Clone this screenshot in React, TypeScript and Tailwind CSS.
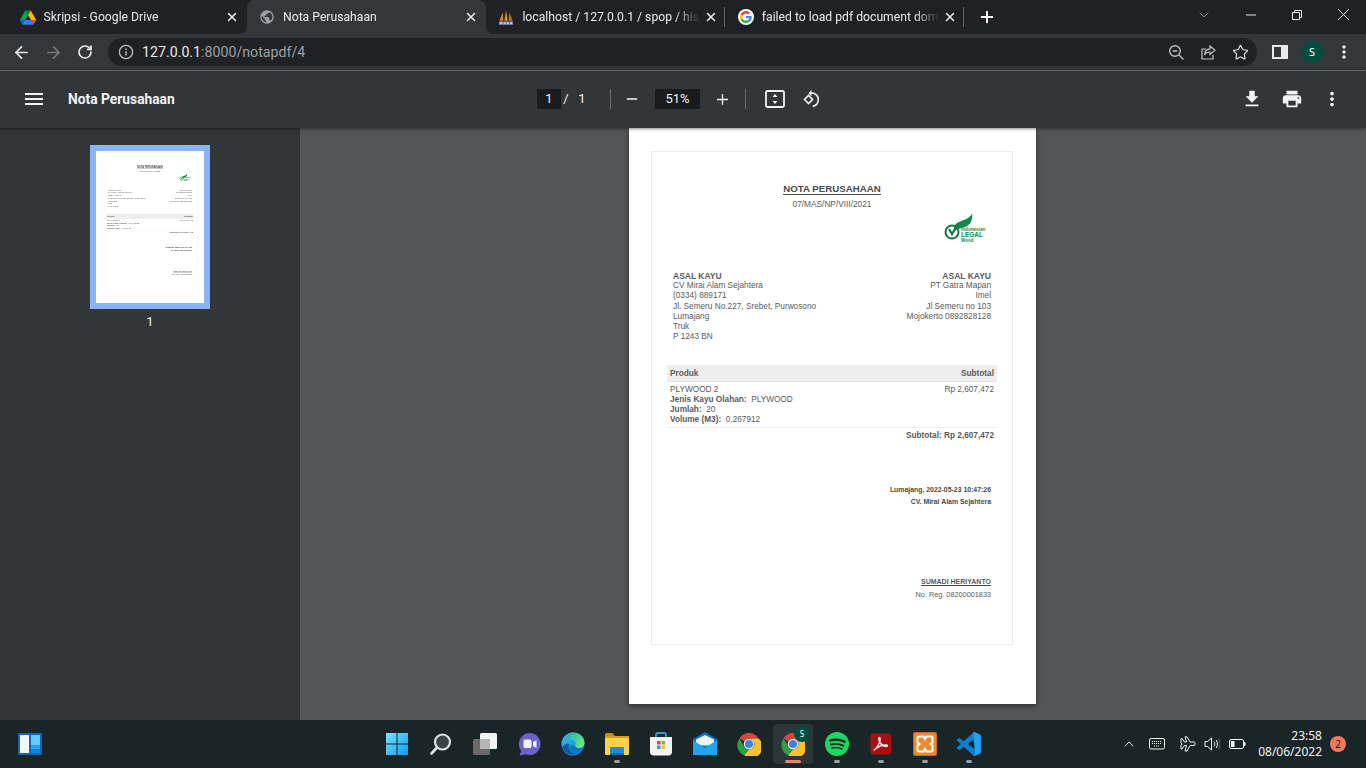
import React from "react";
import { ArrowLeft, ArrowRight, RotateCw, X, Plus, Minus, Star, ChevronDown, ChevronUp } from "lucide-react";

const DriveIcon = () => (
  <svg width="16" height="15" viewBox="0 0 87.3 78">
    <path d="M6.6 66.85l3.85 6.65c.8 1.4 1.95 2.5 3.3 3.3L27.5 53H0c0 1.55.4 3.1 1.2 4.5z" fill="#0066da" />
    <path d="M43.65 25L29.9 1.2c-1.35.8-2.5 1.9-3.3 3.3L1.2 48.5A9.06 9.06 0 000 53h27.5z" fill="#00ac47" />
    <path d="M73.55 76.8c1.35-.8 2.5-1.9 3.3-3.3l1.6-2.75 7.65-13.25c.8-1.4 1.2-2.95 1.2-4.5H59.798l5.852 11.5z" fill="#ea4335" />
    <path d="M43.65 25L57.4 1.2C56.05.4 54.5 0 52.9 0H34.4c-1.6 0-3.15.45-4.5 1.2z" fill="#00832d" />
    <path d="M59.8 53H27.5L13.75 76.8c1.35.8 2.9 1.2 4.5 1.2h50.8c1.6 0 3.15-.45 4.5-1.2z" fill="#2684fc" />
    <path d="M73.4 26.5l-12.7-22c-.8-1.4-1.95-2.5-3.3-3.3L43.65 25 59.8 53h27.45c0-1.55-.4-3.1-1.2-4.5z" fill="#ffba00" />
  </svg>
);

const GlobeIcon = () => (
  <svg width="18" height="18" viewBox="0 0 24 24" fill="#9aa0a6">
    <path d="M12 2C6.48 2 2 6.48 2 12s4.48 10 10 10 10-4.48 10-10S17.52 2 12 2zm-1 17.93c-3.95-.49-7-3.85-7-7.93 0-.62.08-1.21.21-1.79L9 15v1c0 1.1.9 2 2 2v1.93zm6.9-2.54c-.26-.81-1-1.39-1.9-1.39h-1v-3c0-.55-.45-1-1-1H8v-2h2c.55 0 1-.45 1-1V7h2c1.1 0 2-.9 2-2v-.41c2.93 1.19 5 4.06 5 7.41 0 2.08-.8 3.97-2.1 5.39z" />
  </svg>
);

const PmaIcon = () => (
  <svg width="17" height="17" viewBox="0 0 17 17">
    <path d="M8.5 0.5 L6.8 12 H10.2 Z" fill="#f29111" />
    <path d="M5 3 L1.5 12 H5.6 Z" fill="#e4831a" />
    <path d="M12 3 L15.5 12 H11.4 Z" fill="#c96f14" />
    <path d="M1 12.5H16V16.5H1Z" fill="#6c78a8" />
    <path d="M2 13.5h2.5v2H2zM6 13.5h2v2H6zM9.5 13.5h2v2h-2zM13 13.5h2v2h-2z" fill="#cfd4e6" />
  </svg>
);

const GoogleIcon = () => (
  <span className="flex h-4 w-4 shrink-0 items-center justify-center rounded-full bg-white">
    <svg width="12" height="12" viewBox="0 0 48 48">
      <path fill="#EA4335" d="M24 9.5c3.54 0 6.71 1.22 9.21 3.6l6.85-6.85C35.9 2.38 30.47 0 24 0 14.62 0 6.51 5.38 2.56 13.22l7.98 6.19C12.43 13.72 17.74 9.5 24 9.5z" />
      <path fill="#4285F4" d="M46.98 24.55c0-1.57-.15-3.09-.38-4.55H24v9.02h12.94c-.58 2.96-2.26 5.48-4.78 7.18l7.73 6c4.51-4.18 7.09-10.36 7.09-17.65z" />
      <path fill="#FBBC05" d="M10.53 28.59c-.48-1.45-.76-2.99-.76-4.59s.27-3.14.76-4.59l-7.98-6.19C.92 16.46 0 20.12 0 24c0 3.88.92 7.54 2.56 10.78l7.97-6.19z" />
      <path fill="#34A853" d="M24 48c6.48 0 11.93-2.13 15.89-5.81l-7.73-6c-2.15 1.45-4.92 2.3-8.16 2.3-6.26 0-11.57-4.22-13.47-9.91l-7.98 6.19C6.51 42.62 14.62 48 24 48z" />
    </svg>
  </span>
);

function Tab({ icon, title, active, sep }: { icon: React.ReactNode; title: string; active?: boolean; sep?: boolean }) {
  return (
    <div className={`relative flex h-[34px] w-[239.4px] shrink-0 items-center pl-3 pr-[8px] ${active ? "rounded-t-[8px] bg-[#35363a]" : ""}`}>
      {active && (
        <>
          <svg className="absolute bottom-0 left-[-8px]" width="8" height="8" viewBox="0 0 8 8"><path d="M8 0V8H0C5 8 8 5 8 0Z" fill="#35363a" /></svg>
          <svg className="absolute bottom-0 right-[-8px]" width="8" height="8" viewBox="0 0 8 8"><path d="M0 0V8H8C3 8 0 5 0 0Z" fill="#35363a" /></svg>
        </>
      )}
      <span className="flex w-4 shrink-0 items-center justify-center">{icon}</span>
      <span className="ml-2 min-w-0 flex-1 overflow-hidden whitespace-nowrap text-[12.2px] leading-4 text-[#e8eaed] [mask-image:linear-gradient(to_right,black_86%,transparent)] [font-family:Roboto,sans-serif]">
        {title}
      </span>
      <X size={14} strokeWidth={2.6} className="ml-1 shrink-0 text-[#e8eaed]" />
      {sep && <span className="absolute right-[1px] top-[7px] h-5 w-px bg-[#5f6368]" />}
    </div>
  );
}

function TabStrip() {
  return (
    <div className="flex h-[34px] items-center bg-[#202124] pl-[7.6px]">
      <Tab icon={<DriveIcon />} title="Skripsi - Google Drive" />
      <Tab icon={<GlobeIcon />} title="Nota Perusahaan" active />
      <Tab icon={<PmaIcon />} title="localhost / 127.0.0.1 / spop / history" sep />
      <Tab icon={<GoogleIcon />} title="failed to load pdf document domain" sep />
      <Plus size={18} strokeWidth={2.6} className="ml-[13px] text-white" />
      <ChevronDown size={16} strokeWidth={1} className="mb-[5px] ml-[200px] text-[#c4c7c9]" />
      <svg className="mb-[5px] ml-[33px]" width="12" height="12" viewBox="0 0 12 12"><path d="M1 6H11" stroke="#e8eaed" /></svg>
      <svg className="mb-[5px] ml-[34px]" width="12" height="12" viewBox="0 0 12 12" fill="none" stroke="#e8eaed"><path d="M1.5 3.5h7v7h-7zM3.5 3.5v-2h7v7h-2" /></svg>
      <svg className="mb-[5px] ml-[34px]" width="13" height="13" viewBox="0 0 13 13" stroke="#e8eaed"><path d="M1 1L12 12M12 1L1 12" /></svg>
    </div>
  );
}

function BrowserToolbar() {
  return (
    <div className="flex h-[36px] items-center bg-[#35363a] pl-[5px] pr-[6px]">
      <span className="flex w-8 justify-center"><ArrowLeft size={19} strokeWidth={2.2} className="text-[#e8eaed]" /></span>
      <span className="flex w-8 justify-center"><ArrowRight size={19} strokeWidth={2.2} className="text-[#75787c]" /></span>
      <span className="flex w-8 justify-center"><RotateCw size={16} strokeWidth={2.6} className="text-[#e8eaed]" /></span>
      <div className="ml-[7px] flex h-7 flex-1 items-center rounded-full bg-[#202124] pl-[10px] pr-px">
        <svg width="16" height="16" viewBox="0 0 16 16" fill="none">
          <circle cx="8" cy="8" r="6.6" stroke="#bdc1c6" strokeWidth="1.3" />
          <path d="M8 7.2V11.4M8 4.6V6" stroke="#bdc1c6" strokeWidth="1.4" />
        </svg>
        <span className="ml-2 flex-1 text-[14.2px] leading-5 text-[#9aa0a6] [font-family:Roboto,sans-serif]">
          <span className="text-[#e8eaed]">127.0.0.1</span>:8000/notapdf/4
        </span>
        <span className="flex w-8 justify-center">
          <svg width="17" height="17" viewBox="0 0 17 17" fill="none" stroke="#bdc1c6" strokeWidth="1.4"><circle cx="7" cy="7" r="5.3" /><path d="M11 11l4.5 4.5M4.7 7h4.6" /></svg>
        </span>
        <span className="flex w-8 justify-center">
          <svg width="17" height="17" viewBox="0 0 17 17" fill="none" stroke="#bdc1c6" strokeWidth="1.2"><path d="M6 5H2v10h11v-4" /><path d="M10 2l5 4.2-5 4.2V8C7.5 8 5.6 9 4.6 11c.2-3.5 2.2-6 5.4-6.2z" /></svg>
        </span>
        <span className="flex w-8 justify-center"><Star size={17} strokeWidth={1.7} className="text-[#dadce0]" /></span>
      </div>
      <span className="ml-[7px] flex w-8 justify-center">
        <svg width="16" height="14" viewBox="0 0 16 14" fill="none"><rect x="1" y="1" width="14" height="12" stroke="#e8eaed" strokeWidth="2" /><rect x="9" y="1" width="6" height="12" fill="#e8eaed" /></svg>
      </span>
      <span className="flex w-8 justify-center">
        <span className="flex h-[22px] w-[22px] items-center justify-center rounded-full bg-[#004d40] text-[11px] text-white [font-family:'Noto_Sans',sans-serif]">S</span>
      </span>
      <span className="flex w-8 justify-center">
        <svg width="20" height="20" viewBox="0 0 24 24" fill="#e8eaed"><path d="M12 8c1.1 0 2-.9 2-2s-.9-2-2-2-2 .9-2 2 .9 2 2 2zm0 2c-1.1 0-2 .9-2 2s.9 2 2 2 2-.9 2-2-.9-2-2-2zm0 6c-1.1 0-2 .9-2 2s.9 2 2 2 2-.9 2-2-.9-2-2-2z" /></svg>
      </span>
    </div>
  );
}

function PdfToolbar() {
  return (
    <div className="relative z-10 flex h-[58px] items-center border-t border-[#5f6368] bg-[#323639] pb-px text-[#f1f3f4] shadow-[0_1px_3px_rgba(0,0,0,0.45)] [font-family:Roboto,sans-serif]">
      <div className="flex w-[537px] shrink-0 items-center pl-[22px]">
        <svg width="24" height="24" viewBox="0 0 24 24" fill="#f1f3f4"><path d="M3 18h18v-2H3v2zm0-5h18v-2H3v2zm0-7v2h18V6H3z" /></svg>
        <span className="ml-[22px] text-[13.8px] font-bold">Nota Perusahaan</span>
      </div>
      <span className="flex h-5 w-6 items-center justify-center bg-[#191b1c] text-[13px]">1</span>
      <span className="ml-px w-[8px] text-center text-[13px]">/</span>
      <span className="ml-[8px] w-[8px] text-center text-[13px]">1</span>
      <span className="ml-[24px] h-[20px] w-px bg-[#6a6d70]" />
      <Minus size={16} strokeWidth={2} className="ml-[13px]" />
      <span className="ml-[15px] flex h-5 w-[45px] items-center justify-center bg-[#191b1c] text-[13px]">51%</span>
      <Plus size={17} strokeWidth={1.8} className="ml-[14px]" />
      <span className="ml-[14px] h-[20px] w-px bg-[#6a6d70]" />
      <svg className="ml-[19px]" width="20" height="18" viewBox="0 0 20 18" fill="none">
        <rect x="1" y="1" width="18" height="16" rx="1.5" stroke="#f1f3f4" strokeWidth="1.8" />
        <path d="M10 4L7.6 7h4.800zM10 14l-2.400-3h4.800z" fill="#f1f3f4" />
      </svg>
      <svg className="ml-[16px]" width="20" height="20" viewBox="0 0 20 20" fill="none" stroke="#f1f3f4" strokeWidth="1.6">
        <path d="M7 10.500l4 4 4-4-4-4z" transform="translate(-3.500 0)" />
        <path d="M9 4.200c4-1 8.300 1.800 8.300 6.300 0 3.500-2.400 6.200-5.600 6.900" />
        <path d="M10.500 1L7.500 4.200l3 3.200" fill="#f1f3f4" stroke="none" />
      </svg>
      <div className="ml-auto flex pr-[14px]">
        <span className="flex w-10 justify-center">
          <svg width="22" height="22" viewBox="0 0 24 24" fill="#f1f3f4"><path d="M19 9h-4V3H9v6H5l7 7 7-7zM5 18v2h14v-2H5z" /></svg>
        </span>
        <span className="flex w-10 justify-center">
          <svg width="22" height="22" viewBox="0 0 24 24" fill="#f1f3f4"><path d="M19 8H5c-1.660 0-3 1.340-3 3v6h4v4h12v-4h4v-6c0-1.660-1.340-3-3-3zm-3 11H8v-5h8v5zm3-7c-.55 0-1-.45-1-1s.45-1 1-1 1 .45 1 1-.45 1-1 1zm-1-9H6v4h12V3z" /></svg>
        </span>
        <span className="flex w-10 justify-center">
          <svg width="22" height="22" viewBox="0 0 24 24" fill="#f1f3f4"><path d="M12 8c1.100 0 2-.9 2-2s-.9-2-2-2-2 .9-2 2 .9 2 2 2zm0 2c-1.100 0-2 .9-2 2s.9 2 2 2 2-.9 2-2-.9-2-2-2zm0 6c-1.100 0-2 .9-2 2s.9 2 2 2 2-.9 2-2-.9-2-2-2z" /></svg>
        </span>
      </div>
    </div>
  );
}

const LegalLogo = () => (
  <div className="flex h-[31px] w-[44px] items-end">
    <svg width="44" height="31" viewBox="0 0 44 31">
      <path d="M10 14C12 8 20 8 24 5 27 3 28 1 28 0 29 6 27 12 21 14 17 15.500 14 15 11 18Z" fill="#0f8a4a" />
      <path d="M5 16 8 21 14 11" fill="none" stroke="#0f7a45" strokeWidth="2.200" />
      <circle cx="8" cy="19" r="6.500" fill="none" stroke="#0f7a45" strokeWidth="2" />
      <text x="17" y="18" fontSize="4.600" fontWeight="700" fill="#2d7f50" fontFamily="Liberation Sans">Indonesian</text>
      <text x="17" y="24" fontSize="6.500" fontWeight="700" fill="#0f8a4a" fontFamily="Liberation Sans">LEGAL</text>
      <text x="17" y="29" fontSize="4.500" fontWeight="700" fill="#0f8a4a" fontFamily="Liberation Sans">Wood</text>
    </svg>
  </div>
);

function PdfDoc() {
  return (
    <div className="h-[576px] w-[407px] bg-white pl-[22px] pt-[23px] text-[#5a5a5a] [font-family:'Liberation_Sans',sans-serif]">
      <div className="h-[494px] w-[362px] border border-[#ececec]">
        <div className="mt-[31px] text-center text-[9.7px] font-bold leading-[11px] text-[#4a4a4a]">
          <span className="border-b border-[#4a4a4a]">NOTA PERUSAHAAN</span>
        </div>
        <div className="mt-[5px] text-center text-[8.3px] leading-[10px]">07/MAS/NP/VIII/2021</div>
        <div className="mt-[4px] flex justify-end pr-[24px]"><LegalLogo /></div>
        <div className="mt-[27px] flex justify-between px-[21px] text-[8.25px] leading-[10.2px]">
          <div>
            <div className="text-[8.5px] font-bold">ASAL KAYU</div>
            <div>CV Mirai Alam Sejahtera</div>
            <div>(0334) 889171</div>
            <div>Jl. Semeru No.227, Srebet, Purwosono</div>
            <div>Lumajang</div>
            <div>Truk</div>
            <div>P 1243 BN</div>
          </div>
          <div className="text-right">
            <div className="text-[8.5px] font-bold">ASAL KAYU</div>
            <div>PT Gatra Mapan</div>
            <div>Imel</div>
            <div>Jl Semeru no 103</div>
            <div>Mojokerto 0892828128</div>
          </div>
        </div>
        <div className="mx-[15px] mt-[23px] text-[8.25px] leading-[10px]">
          <div className="flex h-[17px] items-center justify-between border-b border-[#e4e4e4] bg-[#eeeeee] px-[3px] pt-px font-bold">
            <span>Produk</span>
            <span>Subtotal</span>
          </div>
          <div className="flex h-[46px] justify-between border-b border-[#eeeeee] px-[3px] pt-[3px]">
            <div>
              <div>PLYWOOD 2</div>
              <div><b>Jenis Kayu Olahan:</b>&nbsp; PLYWOOD</div>
              <div><b>Jumlah:</b>&nbsp; 20</div>
              <div><b>Volume (M3):</b>&nbsp; 0.267912</div>
            </div>
            <div>Rp 2,607,472</div>
          </div>
          <div className="mt-[3px] px-[3px] text-right font-bold">Subtotal: Rp 2,607,472</div>
        </div>
        <div className="mt-[43px] pr-[21px] text-right text-[6.9px] font-bold leading-[12px]">
          <div className="text-[#4a4a3a]">Lumajang, 2022-05-23 10:47:26</div>
          <div className="text-[#3f4a5a]">CV. Mirai Alam Sejahtera</div>
        </div>
        <div className="mt-[67px] pr-[21px] text-right text-[7px] leading-[13px]">
          <div><span className="border-b border-[#444] font-bold">SUMADI HERIYANTO</span></div>
          <div className="text-[7.3px]">No. Reg. 08200001833</div>
        </div>
      </div>
    </div>
  );
}

function Sidebar() {
  return (
    <div className="flex h-full w-[300px] shrink-0 flex-col items-center bg-[#323639] pt-[17px]">
      <div className="h-[164px] w-[120px] bg-[#8ab4f8] p-[6px]">
        <div className="h-[152px] w-[108px] overflow-hidden bg-white">
          <div className="origin-top-left scale-[0.2654] blur-[0.4px]">
            <PdfDoc />
          </div>
        </div>
      </div>
      <div className="mt-[5px] text-[13px] leading-4 text-[#e8eaed] [font-family:Roboto,sans-serif]">1</div>
    </div>
  );
}

const Start = () => (
  <svg width="24" height="24" viewBox="0 0 24 24">
    <defs><linearGradient id="st" x1="0" y1="0" x2="1" y2="1"><stop offset="0" stopColor="#7fe0ff" /><stop offset="1" stopColor="#0a9cf0" /></linearGradient></defs>
    <path d="M1 1h10.500v10.500H1zM12.500 1H23v10.500H12.500zM1 12.500h10.500V23H1zM12.500 12.500H23V23H12.500z" fill="url(#st)" />
  </svg>
);
const SearchTb = () => (
  <svg width="24" height="24" viewBox="0 0 24 24" fill="none">
    <circle cx="13.500" cy="10" r="7.500" fill="#3a4345" stroke="#dfe3e4" strokeWidth="2.200" />
    <path d="M8 15.500L2.500 21.500" stroke="#dfe3e4" strokeWidth="2.600" strokeLinecap="round" />
  </svg>
);
const TaskView = () => (
  <svg width="24" height="24" viewBox="0 0 24 24">
    <rect x="7" y="1" width="17" height="16" rx="1.500" fill="#f2f2f2" />
    <rect x="0" y="7" width="17" height="16" rx="1.500" fill="#6a6a6a" />
    <rect x="7" y="7" width="10" height="10" fill="#b5b5b5" />
  </svg>
);
const Meet = () => (
  <svg width="24" height="24" viewBox="0 0 24 24">
    <path d="M12.500 1a11 11 0 1 1-4 21.200L2.500 23.500l1.700-4.800A11 11 0 0 1 12.500 1z" fill="#6a63c9" />
    <rect x="6.500" y="7.500" width="8" height="8.500" rx="1.500" fill="#f3f2ff" />
    <path d="M16 10l3.500-2v8L16 14z" fill="#f3f2ff" />
  </svg>
);
const Edge = () => (
  <svg width="24" height="24" viewBox="0 0 24 24">
    <defs>
      <linearGradient id="eg" x1="0" y1="0" x2="1" y2="1"><stop offset="0" stopColor="#35c1f1" /><stop offset="0.6" stopColor="#1b9de2" /><stop offset="1" stopColor="#0c59a4" /></linearGradient>
      <linearGradient id="eg2" x1="0" y1="0" x2="1" y2="0.6"><stop offset="0" stopColor="#1b9de2" /><stop offset="1" stopColor="#66eb6e" /></linearGradient>
    </defs>
    <circle cx="12" cy="12" r="11.500" fill="url(#eg)" />
    <path d="M12 .5c6.500 0 11.500 4.500 11.500 10.500 0 3-2.500 5-5.500 5-2.500 0-4-1-4.500-2 2-1.500 1.500-5.500-2-6.500-4-1-8 1.500-9 5C3 6 6.500.5 12 .5z" fill="url(#eg2)" />
    <path d="M8.500 12c-2 3.500.5 9 5.500 10-6 2-11.500-2-12.500-7 2-3 5-4.500 7-3z" fill="#0c59a4" />
    <path d="M14 14c1 2 4 3 6.500 2-1.500 3.500-4 6-6.500 6.500-4-1-6-5-5-9 2-1 4-.5 5 .5z" fill="#0d76c7" />
  </svg>
);
const Files = () => (
  <svg width="24" height="24" viewBox="0 0 24 24">
    <path d="M0 2.500C0 1.700.7 1 1.500 1h6l2.500 3h-10z" fill="#c98a12" />
    <rect x="0" y="4" width="24" height="8" fill="#d99d1c" />
    <rect x="0" y="6" width="24" height="17" rx="1" fill="#fbd24f" />
    <rect x="5" y="15" width="14" height="6" rx="1" fill="#1e8fd6" />
    <rect x="5" y="21" width="14" height="2" fill="#0f6cb0" />
  </svg>
);
const Store = () => (
  <svg width="24" height="24" viewBox="0 0 24 24">
    <path d="M7 5V3c0-1 .7-2 2-2h6c1.300 0 2 1 2 2v2" fill="none" stroke="#2a9fe0" strokeWidth="1.800" />
    <path d="M1 5h22v15c0 2-1.500 3.500-3.500 3.500h-15C2.500 23.500 1 22 1 20z" fill="#f4f4f4" />
    <path d="M8 9h3.500v3.500H8z" fill="#e8452b" />
    <path d="M12.500 9H16v3.500h-3.500z" fill="#79b92b" />
    <path d="M8 13.500h3.500V17H8z" fill="#2a9fe0" />
    <path d="M12.500 13.500H16V17h-3.500z" fill="#fbba1d" />
  </svg>
);
const Mail = () => (
  <svg width="24" height="24" viewBox="0 0 24 24">
    <path d="M0 7L12 0l12 7v16H0z" fill="#0a6fc2" />
    <path d="M3 7.500L12 3l9 4.500v6H3z" fill="#e9f6fd" />
    <path d="M0 8l12 8 12-8v15H0z" fill="#20a4ec" />
  </svg>
);
const Chrome = ({ size = 24 }: { size?: number }) => (
  <svg width={size} height={size} viewBox="0 0 48 48">
    <path d="M24 2a22 22 0 0 1 19 11H24a11 11 0 0 0-9.500 5.500L5 13A22 22 0 0 1 24 2z" fill="#db4437" />
    <path d="M5 13l9.500 16.500A11 11 0 0 0 24 35l-9.500 11.600A22 22 0 0 1 5 13z" fill="#2f9e44" />
    <path d="M43 13a22 22 0 0 1-28.500 33.600L24 35a11 11 0 0 0 9.500-16.500A11 11 0 0 0 24 13z" fill="#fbc02d" />
    <circle cx="24" cy="24" r="10.500" fill="#fff" />
    <circle cx="24" cy="24" r="8.200" fill="#3f7fe8" />
  </svg>
);
const Spotify = () => (
  <svg width="24" height="24" viewBox="0 0 24 24" fill="none">
    <circle cx="12" cy="12" r="12" fill="#1ed760" />
    <path d="M5 8.500c5-1.400 10.500-1 14.500 1.300" stroke="#14241b" strokeWidth="2.300" strokeLinecap="round" />
    <path d="M6 12.500c4.300-1.100 8.800-.6 12.300 1.200" stroke="#14241b" strokeWidth="1.900" strokeLinecap="round" />
    <path d="M7 16c3.500-.8 7.200-.4 10 1" stroke="#14241b" strokeWidth="1.600" strokeLinecap="round" />
  </svg>
);
const Acrobat = () => (
  <svg width="22" height="22" viewBox="0 0 22 22" fill="none">
    <rect width="21" height="21" x=".5" y=".5" rx="3" fill="#a90f0f" />
    <path d="M4 17c2-1 4-4 5.500-7.500.8-2 1-5-.2-5-1.200 0-.6 3 1 5.500 1.500 2.300 3.700 3.500 5.700 3.500 2 0 2-1.500 0-1.500-3 0-7.500 1.500-10 3.500-1 .8-2.200 1.700-2 1.500z" stroke="#f7e6e6" strokeWidth="1.400" />
  </svg>
);
const Xampp = () => (
  <svg width="24" height="24" viewBox="0 0 24 24" fill="none">
    <rect width="24" height="24" rx="2" fill="#c96a1a" />
    <rect x="1" y="1" width="22" height="22" rx="2" fill="#ef8a2c" />
    <path d="M6 4.500h4.500L12 7l1.500-2.500H18c1.200 0 1.500 1 1.500 1.500v4.500L17.500 12l2 1.500V18c0 .8-.7 1.500-1.500 1.500h-4.500L12 17l-1.500 2.500H6c-1 0-1.500-.7-1.500-1.500v-4.500l2-1.500-2-1.500V6c0-.8.500-1.500 1.500-1.500z" stroke="#fff" strokeWidth="2" />
  </svg>
);
const VSCode = () => (
  <svg width="24" height="24" viewBox="0 0 100 100">
    <path fillRule="evenodd" d="M96 11 75 1a6 6 0 0 0-7 1L28 39 11 26a4 4 0 0 0-5 0L1 31a4 4 0 0 0 0 6l15 13L1 63a4 4 0 0 0 0 6l5 5a4 4 0 0 0 5 0l17-13 40 37a6 6 0 0 0 7 1l21-10a6 6 0 0 0 3-5V16a6 6 0 0 0-3-5zM75 72 45 50 75 28z" fill="#0a7fd0" />
    <path d="M68 2a6 6 0 0 1 7-1l21 10a6 6 0 0 1 3 5v68a6 6 0 0 1-3 5L75 99a6 6 0 0 1-7-1c3 2 7 0 7-3z" fill="#21a3f1" />
  </svg>
);

function TbItem({ children, dot, active }: { children: React.ReactNode; dot?: boolean; active?: boolean }) {
  return (
    <div className={`relative mx-[2px] flex h-[40px] w-[40px] items-center justify-center ${active ? "rounded-[4px] bg-[#2c3537]" : ""}`}>
      {children}
      {dot && <span className="absolute bottom-[1px] h-[3px] w-[6px] rounded-full bg-[#9aa0a0]" />}
      {active && <span className="absolute bottom-[1px] h-[3px] w-[16px] rounded-full bg-[#f4806a]" />}
    </div>
  );
}

function Taskbar() {
  return (
    <div className="flex h-[48px] items-center bg-[#1a2528] [font-family:'Noto_Sans',sans-serif]">
      <div className="w-[375px] shrink-0 pl-[18px]">
        <svg width="24" height="22" viewBox="0 0 24 22">
          <rect width="24" height="22" rx="1" fill="#1166b5" />
          <rect x="2" y="2" width="9" height="18" fill="#f5f5f5" />
          <rect x="13" y="2" width="9" height="10" fill="#5fcbff" />
          <rect x="13" y="12" width="9" height="4" fill="#2a9ff0" />
          <rect x="13" y="16" width="9" height="4" fill="#0a84e8" />
        </svg>
      </div>
      <div className="flex">
        <TbItem><Start /></TbItem>
        <TbItem><SearchTb /></TbItem>
        <TbItem><TaskView /></TbItem>
        <TbItem><Meet /></TbItem>
        <TbItem><Edge /></TbItem>
        <TbItem dot><Files /></TbItem>
        <TbItem><Store /></TbItem>
        <TbItem><Mail /></TbItem>
        <TbItem><Chrome /></TbItem>
        <TbItem active>
          <Chrome />
          <span className="absolute right-[3px] top-[2px] flex h-[16px] w-[16px] items-center justify-center rounded-full bg-[#004d40] text-[8px] text-white">S</span>
        </TbItem>
        <TbItem dot><Spotify /></TbItem>
        <TbItem dot><Acrobat /></TbItem>
        <TbItem dot><Xampp /></TbItem>
        <TbItem dot><VSCode /></TbItem>
      </div>
      <div className="ml-[130px] flex items-center text-[#f2f4f4]">
        <ChevronUp size={16} strokeWidth={1.5} />
        <svg className="ml-[12px]" width="16" height="12" viewBox="0 0 16 12" fill="none" stroke="#f2f4f4"><rect x=".5" y=".5" width="15" height="10.500" rx="1.500" /><path d="M3 3.500h10M3 5.500h10M5 8h6" strokeDasharray="1 1" /></svg>
        <svg className="ml-[15px]" width="16" height="16" viewBox="0 0 16 16" fill="none" stroke="#f2f4f4"><path d="M1 6.500V2.500H2L4.500 6H6.500L5 .8H7L10 6h4c1.500 0 1.500 3.500 0 3.500h-4L7 15H5l1.500-5.500h-2L2 13H1V9.500L2 8z" /></svg>
        <svg className="ml-[8px]" width="16" height="16" viewBox="0 0 16 16" fill="none" stroke="#f2f4f4"><path d="M1 5.500h2.500L7.500 2v12L3.500 10.500H1z" /><path d="M10 5.500c1 1.500 1 3.500 0 5M12.200 4c1.600 2.200 1.600 5.800 0 8" /><path d="M14.500 2.500c2 3 2 8 0 11" stroke="#6d7375" /></svg>
        <svg className="ml-[9px]" width="17" height="12" viewBox="0 0 17 12" fill="none"><rect x=".5" y="1.500" width="14" height="9" rx="1.500" stroke="#f2f4f4" /><rect x="2" y="3" width="3.500" height="6" fill="#f2f4f4" /><rect x="15" y="4" width="1.500" height="4" fill="#f2f4f4" /></svg>
        <div className="ml-[8px] w-[68px] text-right text-[12px] leading-[16px]">
          <div>23:58</div>
          <div>08/06/2022</div>
        </div>
        <span className="ml-[8px] flex h-4 w-4 items-center justify-center rounded-full bg-[#f4795b] text-[10px] text-[#1a1a1a]">2</span>
      </div>
    </div>
  );
}

export default function App() {
  return (
    <div className="flex h-screen w-[1366px] flex-col overflow-hidden bg-[#525659]">
      <TabStrip />
      <BrowserToolbar />
      <PdfToolbar />
      <div className="flex h-[592px]">
        <Sidebar />
        <div className="flex-1 bg-[#525659] pl-[329px]">
          <div className="w-[407px] shadow-[0_2px_5px_rgba(0,0,0,0.45)]">
            <PdfDoc />
          </div>
        </div>
      </div>
      <Taskbar />
    </div>
  );
}
